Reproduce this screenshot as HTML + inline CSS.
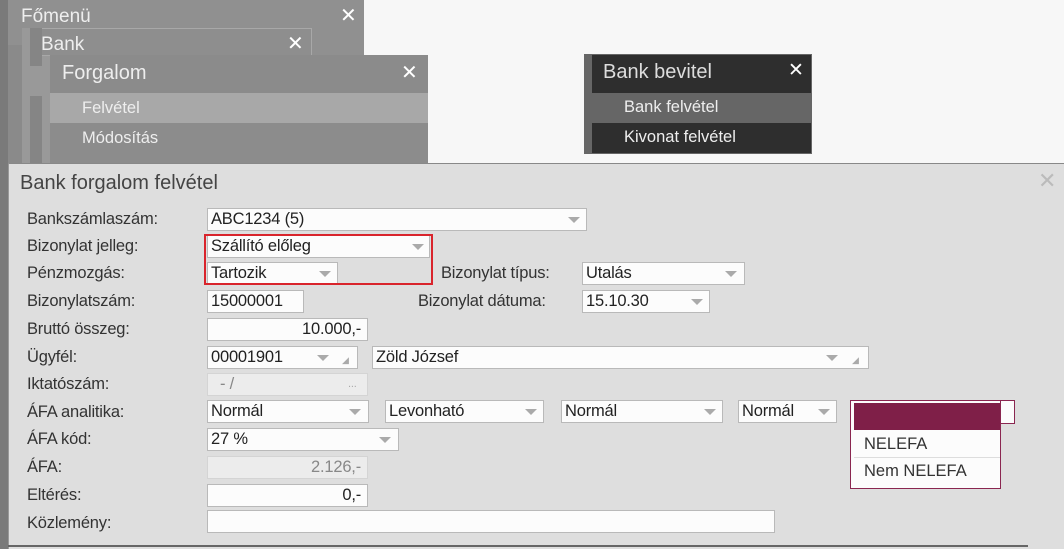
<!DOCTYPE html>
<html><head><meta charset="utf-8"><style>
*{margin:0;padding:0;box-sizing:border-box}
body{width:1064px;height:549px;background:#f7f7f7;position:relative;overflow:hidden;font-family:"Liberation Sans",sans-serif;color:#333}
.a{position:absolute}
.lbl{position:absolute;left:27px;font-size:16.5px;color:#333;letter-spacing:-0.2px}
.in{position:absolute;height:23px;background:#fcfcfc;border:1px solid #b9b9b9;font-size:16.5px;line-height:21px;padding-left:3px;color:#222;white-space:nowrap;overflow:hidden;letter-spacing:-0.2px}
.dis{background:#ececec;color:#888;border-color:#d4d4d4}
.tri{position:absolute;top:8px;width:0;height:0;border-left:6px solid transparent;border-right:6px solid transparent;border-top:6px solid #aaa}
.r{text-align:right;padding-right:6px}
.wt{color:#eee;font-size:17px}
</style></head><body>
<div class="a" style="left:0;top:0;width:8px;height:549px;background:#7a7a7a"></div>
<div class="a" style="left:8px;top:0;width:356px;height:163px;background:#909090"></div>
<div class="a wt" style="left:21px;top:6px;font-size:19px">Főmenü</div>
<div class="a" style="left:340px;top:3px;color:#fff;font-size:20px">✕</div>
<div class="a" style="left:8px;top:45px;width:14px;height:118px;background:#8a8a8a"></div>
<div class="a" style="left:22px;top:28px;width:290px;height:135px;background:#999"></div>
<div class="a" style="left:30px;top:28px;width:282px;height:28px;background:#8e8e8e;border:1px solid #a8a8a8"></div>
<div class="a" style="left:30px;top:28px;width:12px;height:38px;background:#858585"></div>
<div class="a wt" style="left:41px;top:34px;font-size:19px">Bank</div>
<div class="a" style="left:287px;top:31px;color:#fff;font-size:20px">✕</div>
<div class="a" style="left:30px;top:96px;width:12px;height:67px;background:#858585"></div>
<div class="a" style="left:50px;top:55px;width:378px;height:108px;background:#a3a3a3"></div>
<div class="a" style="left:50px;top:55px;width:378px;height:38px;background:#8b8b8b"></div>
<div class="a wt" style="left:62px;top:62px;font-size:20px">Forgalom</div>
<div class="a" style="left:401px;top:60px;color:#fff;font-size:20px">✕</div>
<div class="a" style="left:50px;top:93px;width:378px;height:30px;background:#a8a8a8"></div>
<div class="a" style="left:50px;top:123px;width:378px;height:40px;background:#8c8c8c"></div>
<div class="a wt" style="left:82px;top:99px;font-size:16.5px">Felvétel</div>
<div class="a wt" style="left:82px;top:129px;font-size:16.5px">Módosítás</div>
<div class="a" style="left:584px;top:54px;width:228px;height:100px;background:#2e2e2e;border:1px solid #666"></div>
<div class="a" style="left:584px;top:54px;width:8px;height:100px;background:#666"></div>
<div class="a" style="left:592px;top:93px;width:219px;height:30px;background:#666"></div>
<div class="a" style="left:603px;top:61px;color:#ddd;font-size:20px">Bank bevitel</div>
<div class="a" style="left:788px;top:59px;color:#fff;font-size:19px">✕</div>
<div class="a" style="left:624px;top:98px;color:#eee;font-size:16.5px">Bank felvétel</div>
<div class="a" style="left:624px;top:128px;color:#eee;font-size:16.5px">Kivonat felvétel</div>
<div class="a" style="left:8px;top:163px;width:1056px;height:386px;background:#dedede;border-top:1px solid #888;border-left:1px solid #999"></div>
<div class="a" style="left:8px;top:545px;width:1020px;height:2px;background:#666"></div>
<div class="a" style="left:20px;top:172px;font-size:20px;color:#444">Bank forgalom felvétel</div>
<div class="a" style="left:1038px;top:168px;color:#bbb;font-size:22px">✕</div>

<div class="lbl" style="top:210px">Bankszámlaszám:</div>
<div class="lbl" style="top:237px">Bizonylat jelleg:</div>
<div class="lbl" style="top:264px">Pénzmozgás:</div>
<div class="lbl" style="top:292px">Bizonylatszám:</div>
<div class="lbl" style="top:320px">Bruttó összeg:</div>
<div class="lbl" style="top:348px">Ügyfél:</div>
<div class="lbl" style="top:375px">Iktatószám:</div>
<div class="lbl" style="top:403px">ÁFA analitika:</div>
<div class="lbl" style="top:430px">ÁFA kód:</div>
<div class="lbl" style="top:458px">ÁFA:</div>
<div class="lbl" style="top:486px">Eltérés:</div>
<div class="lbl" style="top:514px">Közlemény:</div>

<div class="in" style="left:207px;top:208px;width:380px">ABC1234 (5)<span class="tri" style="left:360px"></span></div>
<div class="in" style="left:207px;top:235px;width:223px">Szállító előleg<span class="tri" style="left:204px"></span></div>
<div class="in" style="left:207px;top:262px;width:131px">Tartozik<span class="tri" style="left:111px"></span></div>
<div class="a" style="left:204px;top:234px;width:229px;height:51px;border:2px solid #d9242c"></div>
<div class="lbl" style="left:441px;top:264px">Bizonylat típus:</div>
<div class="in" style="left:582px;top:262px;width:163px">Utalás<span class="tri" style="left:142px"></span></div>
<div class="in" style="left:207px;top:290px;width:97px">15000001</div>
<div class="lbl" style="left:418px;top:292px">Bizonylat dátuma:</div>
<div class="in" style="left:582px;top:290px;width:128px">15.10.30<span class="tri" style="left:108px"></span></div>
<div class="in r" style="left:207px;top:318px;width:161px">10.000,-</div>
<div class="in" style="left:207px;top:346px;width:151px">00001901<span class="tri" style="left:109px"></span><span class="a" style="left:134px;top:8px;color:#aaa;font-size:9px;line-height:10px">◢</span></div>
<div class="in" style="left:372px;top:346px;width:497px">Zöld József<span class="tri" style="left:453px"></span><span class="a" style="left:479px;top:8px;color:#aaa;font-size:9px;line-height:10px">◢</span></div>
<div class="in dis" style="left:207px;top:373px;width:161px;padding-left:12px">- /<span class="a" style="left:140px;top:0;color:#aaa;font-size:11px">...</span></div>
<div class="in" style="left:207px;top:400px;width:162px">Normál<span class="tri" style="left:141px"></span></div>
<div class="in" style="left:385px;top:400px;width:159px">Levonható<span class="tri" style="left:139px"></span></div>
<div class="in" style="left:561px;top:400px;width:162px">Normál<span class="tri" style="left:142px"></span></div>
<div class="in" style="left:738px;top:400px;width:99px">Normál<span class="tri" style="left:79px"></span></div>
<div class="a" style="left:850px;top:400px;width:165px;height:24px;background:#fcfcfc;border:1px solid #8a2650"></div>
<div class="a" style="left:850px;top:400px;width:151px;height:89px;background:#fcfcfc;border:1px solid #8a2650"></div>
<div class="a" style="left:854px;top:403px;width:146px;height:27px;background:#7f1f48"></div>
<div class="a" style="left:864px;top:435px;font-size:16.5px;color:#333">NELEFA</div>
<div class="a" style="left:854px;top:457px;width:146px;height:1px;background:#ddd"></div>
<div class="a" style="left:864px;top:462px;font-size:16.5px;color:#333">Nem NELEFA</div>
<div class="in" style="left:207px;top:428px;width:192px">27 %<span class="tri" style="left:171px"></span></div>
<div class="in dis r" style="left:207px;top:456px;width:161px">2.126,-</div>
<div class="in r" style="left:207px;top:484px;width:161px">0,-</div>
<div class="in" style="left:207px;top:510px;width:568px"></div>
</body></html>
